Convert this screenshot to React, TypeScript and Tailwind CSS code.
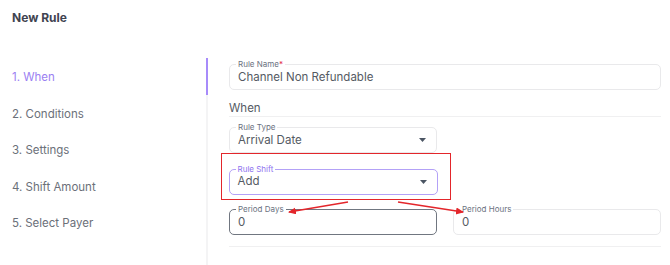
import React from 'react';

const steps = ['1. When', '2. Conditions', '3. Settings', '4. Shift Amount', '5. Select Payer'];

interface FieldProps {
  label: string;
  value: string;
  required?: boolean;
  select?: boolean;
  tone?: 'idle' | 'focus' | 'hover';
  className?: string;
}

const Field: React.FC<FieldProps> = ({ label, value, required, select, tone = 'idle', className = '' }) => {
  const border =
    tone === 'focus' ? 'border-[#b3a1f7]' : tone === 'hover' ? 'border-[#707680]' : 'border-[#e9e9eb]';
  const labelColor = tone === 'focus' ? 'text-[#8f74ef]' : 'text-[#6b7280]';
  return (
    <div className={`relative h-[26px] rounded-[5px] border ${border} pl-[8px] pr-[10px] flex items-center ${className}`}>
      <span className={`absolute -top-[5px] left-[6px] bg-white px-[2px] text-[8px] leading-[9px] ${labelColor}`}>
        {label}
        {required && <span className="text-[#e11d48]">*</span>}
      </span>
      <span className="flex-1 pt-[1px] text-[11.5px] leading-none text-[#555a63]">{value}</span>
      {select && (
        <svg width="7" height="4" viewBox="0 0 7 4">
          <path d="M0 0h7L3.5 4z" fill="#4b5563" />
        </svg>
      )}
    </div>
  );
};

export default function App() {
  return (
    <div className="w-[670px] h-[265px] bg-white overflow-hidden font-['Inter',sans-serif] relative">
      <div className="h-[35px] pl-[12px] pt-[9px]">
        <h2 className="text-[12px] font-bold text-[#3f4451]">New Rule</h2>
      </div>

      <div className="flex">
        {/* Steps */}
        <div className="w-[206px] pt-[35px]">
          <ul className="flex flex-col gap-[22.5px] pl-[12px]">
            {steps.map((s, i) => (
              <li
                key={s}
                className={`text-[11.5px] leading-[14px] ${i === 0 ? 'text-[#9b80f2]' : 'text-[#6b7079]'}`}
              >
                {s}
              </li>
            ))}
          </ul>
        </div>

        {/* Divider */}
        <div className="w-[2px] h-[210px] mt-[23px] bg-[#f4f4f5]">
          <div className="h-[37px] w-[2px] bg-[#a78bfa]" />
        </div>

        {/* Form */}
        <div className="flex-1 flex flex-col pl-[21px] pr-[9px] pt-[29px]">
          <Field label="Rule Name" required value="Channel Non Refundable" />

          <div className="mt-[11px] border-b border-[#f0f0f1] pb-[1px] text-[11.5px] leading-[14px] text-[#555a63]">
            When
          </div>

          <div className="mt-[10px] w-[208px]">
            <Field label="Rule Type" value="Arrival Date" select />
          </div>

          <div className="-ml-[8px] w-[230px] border-[1.5px] border-[#e3262b] pl-[6.5px] pr-[12.5px] pt-[14.5px] pb-[4.5px]">
            <Field label="Rule Shift" value="Add" select tone="focus" />
          </div>

          <div className="mt-[9px] flex gap-[16px]">
            <Field label="Period Days" value="0" tone="hover" className="w-[208px]" />
            <Field label="Period Hours" value="0" className="flex-1" />
          </div>

          <div className="mt-[11px] border-b border-[#f0f0f1]" />
        </div>
      </div>

      {/* Annotation arrows */}
      <svg className="absolute left-0 top-0 pointer-events-none" width="670" height="265">
        <defs>
          <marker id="ah" markerWidth="9" markerHeight="9" refX="7" refY="3.5" orient="auto" markerUnits="userSpaceOnUse">
            <path d="M0 0L8 3.5L0 7z" fill="#e3262b" />
          </marker>
        </defs>
        <line x1="348" y1="202" x2="289" y2="212" stroke="#e3262b" strokeWidth="1.5" markerEnd="url(#ah)" />
        <line x1="398" y1="202" x2="463" y2="212" stroke="#e3262b" strokeWidth="1.5" markerEnd="url(#ah)" />
      </svg>
    </div>
  );
}
